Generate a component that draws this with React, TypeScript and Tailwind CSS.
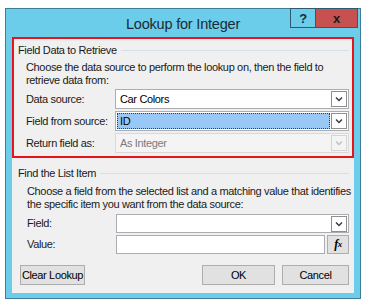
import React from 'react';

const font = "font-['Segoe_UI','Liberation_Sans',Arial,sans-serif]";

function Chevron({ disabled = false }: { disabled?: boolean }) {
  return (
    <span
      className={`w-[16px] h-[16px] border flex items-center justify-center shrink-0 ${
        disabled ? 'border-[#d5d5d5] bg-[#f4f4f4]' : 'border-[#8e8f8f] bg-white'
      }`}
    >
      <svg width="8" height="6" viewBox="0 0 8 6">
        <polyline
          points="1,1.5 4,4.5 7,1.5"
          fill="none"
          stroke={disabled ? '#c2c2c2' : '#3d3d3d'}
          strokeWidth="1.5"
        />
      </svg>
    </span>
  );
}

function Combo({ value, selected = false, disabled = false, h = 'h-[20px]' }: { value?: string; selected?: boolean; disabled?: boolean; h?: string }) {
  return (
    <div
      className={`w-[234px] ${h} border flex items-center gap-[1px] pl-[1px] pr-[1px] ${
        disabled ? 'border-[#d9d9d9] bg-[#f4f4f4]' : 'border-[#abadb3] bg-white'
      }`}
    >
      {selected ? (
        <div className="flex-1 h-[16px] bg-[#99c8f6] border border-dotted border-[#3b3b3b] flex items-center pl-[2px] text-black">
          {value}
        </div>
      ) : (
        <div className={`flex-1 pl-[3px] ${disabled ? 'text-[#7a7a7a]' : 'text-black'}`}>{value}</div>
      )}
      <Chevron disabled={disabled} />
    </div>
  );
}

function Row({ label, children }: { label: string; children: React.ReactNode }) {
  return (
    <div className="flex items-center">
      <span className="w-[89px] shrink-0">{label}</span>
      {children}
    </div>
  );
}

function GroupTitle({ title }: { title: string }) {
  return (
    <div className="flex items-center gap-[4px] h-[14px]">
      <span>{title}</span>
      <span className="flex-1 border-t border-[#d5dfe5]" />
    </div>
  );
}

function WinButton({ label, w }: { label: string; w: string }) {
  return (
    <button className={`${w} h-[20px] bg-[#e1e1e1] border border-[#adadad] flex items-center justify-center text-black`}>
      {label}
    </button>
  );
}

export default function App() {
  return (
    <div className={`w-[369px] h-[308px] bg-white pt-[8px] pl-[5px] ${font} text-[11px] leading-[13px] tracking-[-0.35px] whitespace-nowrap text-[#1a1a1a]`}>
      <div className="w-[356px] h-[291px] border border-[#3f7c96] bg-[#6ccdea] flex flex-col px-[6px] pb-[5px]">
        {/* title bar */}
        <div className="relative h-[28px] shrink-0 flex items-center justify-center">
          <span className="text-[14.5px] leading-[18px] tracking-[-0.2px] text-[#1b2b33] mt-[1px]">Lookup for Integer</span>
          <div className="absolute -top-px right-[-4px] flex">
            <span className="w-[26px] h-[20px] border border-[#2f5b70] bg-[#6ccdea] flex items-center justify-center text-[13px] font-bold text-[#1b2b33]">?</span>
            <span className="w-[42px] h-[20px] border border-l-0 border-[#2f5b70] bg-[#c75050] flex items-center justify-center text-[13px] font-bold text-[#1b1b1b]">x</span>
          </div>
        </div>

        {/* client area */}
        <div className="flex-1 bg-[#f0f0f0] flex flex-col">
          <div className="h-[121px] border-2 border-[#e8141c] pl-[4px] pr-[3px] pt-[4px] flex flex-col">
            <GroupTitle title="Field Data to Retrieve" />
            <div className="pl-[8px] pt-[4px]">
              <p>Choose the data source to perform the lookup on, then the field to</p>
              <p>retrieve data from:</p>
            </div>
            <div className="pl-[8px] pt-[2px] flex flex-col gap-[2px]">
              <Row label="Data source:">
                <Combo value="Car Colors" />
              </Row>
              <Row label="Field from source:">
                <Combo value="ID" selected />
              </Row>
              <Row label="Return field as:">
                <Combo value="As Integer" disabled />
              </Row>
            </div>
          </div>

          <div className="pl-[6px] pr-[5px] pt-[8px] flex flex-col">
            <GroupTitle title="Find the List Item" />
            <div className="pl-[9px] pt-[5px]">
              <p>Choose a field from the selected list and a matching value that identifies</p>
              <p>the specific item you want from the data source:</p>
            </div>
            <div className="pl-[9px] pt-[3px] flex flex-col gap-[2px]">
              <Row label="Field:">
                <Combo h="h-[19px]" />
              </Row>
              <div className="flex items-center">
                <span className="w-[89px] shrink-0">Value:</span>
                <div className="w-[210px] h-[19px] border border-[#abadb3] bg-white" />
                <span className="ml-[2px] w-[22px] h-[19px] bg-[#e1e1e1] border border-[#adadad] flex items-center justify-center font-['Liberation_Serif',serif] italic font-bold text-[12px] text-black">
                  f<span className="text-[9px]">x</span>
                </span>
              </div>
            </div>
            <div className="flex items-center pl-[2px] pt-[11px]">
              <WinButton label="Clear Lookup" w="w-[65px]" />
              <div className="flex-1" />
              <WinButton label="OK" w="w-[73px]" />
              <div className="w-[7px]" />
              <WinButton label="Cancel" w="w-[67px]" />
            </div>
          </div>
        </div>
      </div>
    </div>
  );
}
